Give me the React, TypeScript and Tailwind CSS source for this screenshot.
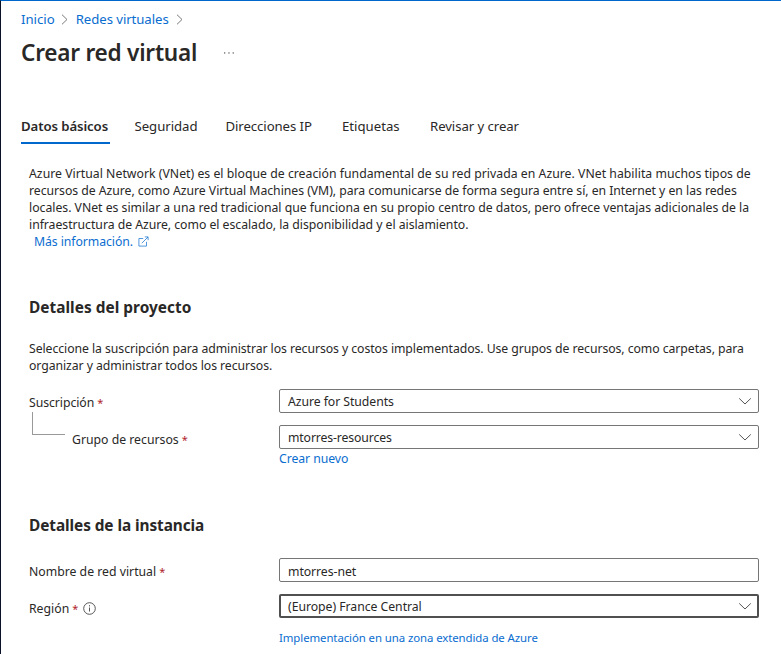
import type { ReactNode } from "react";

function Crumb({ children }: { children: ReactNode }) {
  return <a className="text-[#0a6dd0]">{children}</a>;
}

function CrumbArrow() {
  return (
    <svg width="8" height="12" viewBox="0 0 8 12" fill="none" stroke="#7a7a7a" strokeWidth="1">
      <path d="M1 1.7 6 6.5 1 11.3" />
    </svg>
  );
}

function Chevron() {
  return (
    <svg width="14" height="8" viewBox="0 0 14 8" fill="none" stroke="#555" strokeWidth="1" className="shrink-0">
      <path d="M1.2 1.4 7 7 12.8 1.4" />
    </svg>
  );
}

function Required() {
  return <span className="ml-[3px] text-[11px] leading-none tracking-normal text-[#b0242c]">*</span>;
}

function Select({ children, focused = false }: { children: ReactNode; focused?: boolean }) {
  return (
    <div
      className={
        focused
          ? "flex h-6 w-[480px] items-center justify-between rounded-[2px] border-2 border-[#505050] pl-[7px] pr-[5px]"
          : "flex h-6 w-[480px] items-center justify-between rounded-[2px] border border-[#767676] pl-2 pr-[6px]"
      }
    >
      {children}
      <Chevron />
    </div>
  );
}

export default function App() {
  return (
    <div className="h-[654px] w-[781px] overflow-hidden whitespace-nowrap border-l border-t border-l-[#0b1226] border-t-[#0068cd] bg-white font-['Noto_Sans','Open_Sans',sans-serif] text-[12.25px] leading-[17px] text-[#292827]">
      <nav className="mt-2 flex h-5 items-center pl-5 text-[13.2px] leading-5">
        <Crumb>Inicio</Crumb>
        <span className="ml-[6px] mr-[7px]"><CrumbArrow /></span>
        <Crumb><span className="tracking-[-0.07px]">Redes virtuales</span></Crumb>
        <span className="ml-[7px]"><CrumbArrow /></span>
      </nav>

      <header className="mt-2 flex h-8 items-center pl-5">
        <h1 className="w-[202px] text-[22.6px] font-semibold leading-8 tracking-[-0.24px]">Crear red virtual</h1>
        <svg width="12" height="2" viewBox="0 0 12 2" fill="#666">
          <rect x="1" y="0.3" width="1.3" height="1.3" />
          <rect x="5.3" y="0.3" width="1.3" height="1.3" />
          <rect x="9.6" y="0.3" width="1.3" height="1.3" />
        </svg>
      </header>

      <div className="mt-[47px] flex pl-5 text-[13.2px] leading-5" role="tablist">
        <div className="h-7 w-[89px] border-b-2 border-[#0068cd] font-semibold tracking-[-0.09px]">Datos básicos</div>
        <div className="ml-[24.5px] w-[91px] tracking-[-0.05px]">Seguridad</div>
        <div className="w-[116.5px] tracking-[-0.08px]">Direcciones IP</div>
        <div className="w-[88px]">Etiquetas</div>
        <div className="tracking-[-0.07px]">Revisar y crear</div>
      </div>

      <main className="pl-7">
        <p className="mt-[21px]">
          <span className="block tracking-[0.02px]">Azure Virtual Network (VNet) es el bloque de creación fundamental de su red privada en Azure. VNet habilita muchos tipos de</span>
          <span className="block tracking-[-0.036px]">recursos de Azure, como Azure Virtual Machines (VM), para comunicarse de forma segura entre sí, en Internet y en las redes</span>
          <span className="block tracking-[-0.018px]">locales. VNet es similar a una red tradicional que funciona en su propio centro de datos, pero ofrece ventajas adicionales de la</span>
          <span className="block tracking-[-0.035px]">infraestructura de Azure, como el escalado, la disponibilidad y el aislamiento.</span>
        </p>
        <a className="flex items-center pl-[5px] text-[#0a6dd0]">
          <span className="tracking-[-0.07px]">Más información.</span>
          <svg width="11" height="11" viewBox="0 0 11 11" fill="none" stroke="#0a6dd0" strokeWidth="0.7" className="ml-[5px]">
            <path d="M5.2 2.5H.9v7.6h7.6V5.8M3.8 7.2 10 1M6.8.9h3.3v3.3" />
          </svg>
        </a>

        <h2 className="mt-[47px] text-[15.4px] font-bold leading-[22px] tracking-[0.03px]">Detalles del proyecto</h2>
        <p className="mt-[21px] tracking-[-0.063px]">
          <span className="block">Seleccione la suscripción para administrar los recursos y costos implementados. Use grupos de recursos, como carpetas, para</span>
          <span className="block">organizar y administrar todos los recursos.</span>
        </p>

        <div className="mt-[15px] flex">
          <div className="w-[250px] pt-[5px]">
            <div className="h-[17px] tracking-[-0.06px]">Suscripción<Required /></div>
            <div className="flex pl-[3px]">
              <div className="mt-[1px] h-[23px] w-[33px] border-b border-l border-[#999]" />
              <div className="ml-[7px] mt-[20px] h-[17px]">Grupo de recursos<Required /></div>
            </div>
          </div>
          <div>
            <Select><span className="tracking-[-0.06px]">Azure for Students</span></Select>
            <div className="h-3" />
            <Select><span className="tracking-[-0.13px]">mtorres-resources</span></Select>
            <a className="mt-[1px] block tracking-[-0.07px] text-[#0a6dd0]">Crear nuevo</a>
          </div>
        </div>

        <h2 className="mt-12 text-[15.4px] font-bold leading-[22px] tracking-[-0.08px]">Detalles de la instancia</h2>
        <div className="mt-[21px] flex">
          <div className="w-[250px] pt-[5px]">Nombre de red virtual<Required /></div>
          <div className="flex h-6 w-[480px] items-center rounded-[2px] border border-[#767676] pl-2 pt-[2px] tracking-[-0.06px]">mtorres-net</div>
        </div>
        <div className="mt-3 flex">
          <div className="flex h-6 w-[250px] items-center pt-[5px]">
            <span>Región<Required /></span>
            <svg width="13" height="13" viewBox="0 0 13 13" fill="none" stroke="#444" className="ml-[5px]">
              <circle cx="6.5" cy="6.5" r="5.8" strokeWidth="0.9" />
              <path d="M6.5 5.5v4M6.5 3.2v1.2" strokeWidth="0.9" />
            </svg>
          </div>
          <Select focused><span className="tracking-[-0.04px]">(Europe) France Central</span></Select>
        </div>
        <a className="ml-[250px] mt-[11px] block text-[11.4px] tracking-[-0.08px] text-[#0a6dd0]">Implementación en una zona extendida de Azure</a>
      </main>
    </div>
  );
}
